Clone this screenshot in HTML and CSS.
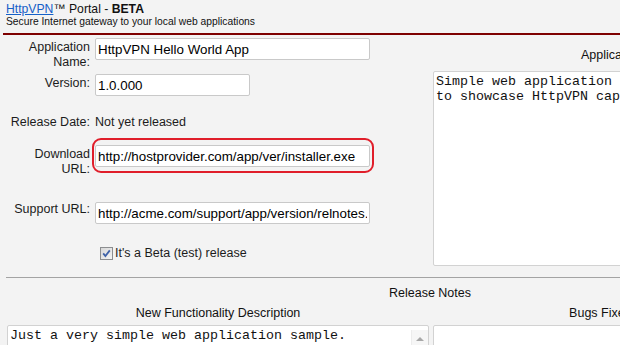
FILE: index.html
```html
<!DOCTYPE html>
<html lang="en">
<head>
    <meta charset="UTF-8">
    <title>HttpVPN Portal - Application</title>
    <link rel="stylesheet" href="styles.css">
</head>
<body>
    <div class="page">
        <!-- header -->
        <div class="masthead">
            <div class="brand"><a href="#">HttpVPN</a>™ Portal - <b>BETA</b></div>
            <div class="tagline">Secure Internet gateway to your local web applications</div>
        </div>
        <div class="rule"></div>

        <!-- application details -->
        <div class="top">
            <div class="app-form">
                <div class="row row-name">
                    <label>Application Name:</label>
                    <input type="text" class="field" value="HttpVPN Hello World App">
                </div>
                <div class="row row-version">
                    <label>Version:</label>
                    <input type="text" class="field field-short" value="1.0.000">
                </div>
                <div class="row row-date">
                    <label>Release Date:</label>
                    <span class="value">Not yet released</span>
                </div>
                <div class="row row-download">
                    <label>Download URL:</label>
                    <div class="highlight">
                        <input type="text" class="field" value="http://hostprovider.com/app/ver/installer.exe">
                    </div>
                </div>
                <div class="row row-support">
                    <label class="label-flush">Support URL:</label>
                    <input type="text" class="field" value="http://acme.com/support/app/version/relnotes.html">
                </div>
                <div class="row row-beta">
                    <span></span>
                    <label class="check">
                        <svg width="13" height="13" viewBox="0 0 13 13">
                            <defs>
                                <linearGradient id="boxFill" x1="0" y1="0" x2="1" y2="1">
                                    <stop offset="0" stop-color="#d6d6d6"/>
                                    <stop offset="1" stop-color="#f6f6f6"/>
                                </linearGradient>
                            </defs>
                            <rect x="0.5" y="0.5" width="12" height="12" fill="url(#boxFill)" stroke="#8c8e90"/>
                            <path d="M3.2 6.4 L5.4 9 L9.8 3.4" fill="none" stroke="#3f62a8" stroke-width="1.8"/>
                        </svg>
                        It's a Beta (test) release
                    </label>
                </div>
            </div>
            <div class="desc-col">
                <div class="col-title">Application Description</div>
                <textarea class="desc-box">Simple web application
to showcase HttpVPN capabilities.</textarea>
            </div>
        </div>

        <div class="divider"></div>

        <!-- release notes -->
        <div class="notes">
            <div class="notes-title">Release Notes</div>
            <div class="notes-grid">
                <div class="notes-col">
                    <div class="col-title">New Functionality Description</div>
                    <div class="scroll-wrap">
                        <textarea class="note-box note-scroll">Just a very simple web application sample.
Shows how a local web application can be
published through the HttpVPN gateway.
It has no other functionality.</textarea>
                        <div class="scroll-bar"><span class="arrow-up"></span></div>
                    </div>
                </div>
                <div class="notes-col">
                    <div class="col-title">Bugs Fixed / Known Issues</div>
                    <textarea class="note-box"></textarea>
                </div>
            </div>
        </div>
    </div>
</body>
</html>
```

FILE: styles.css
```css
/* base */
* {
    box-sizing: border-box;
    margin: 0;
    padding: 0;
}
html, body {
    overflow: hidden;
}
body {
    font-family: "Liberation Sans", Arial, sans-serif;
    font-size: 12.5px;
    line-height: 15px;
    color: #1c1c1c;
    background: #f3f3f3;
}
.page {
    width: 860px;
}

/* header */
.masthead {
    padding: 2px 0 0 6px;
}
.brand {
    font-size: 12.2px;
    line-height: 14px;
    color: #111;
}
.brand a {
    color: #1660c8;
}
.tagline {
    font-size: 10.3px;
    line-height: 12px;
    color: #111;
}
.rule {
    margin: 5px 0 0 3px;
    border-top: 2px solid #7e0000;
}

/* top area */
.top {
    display: grid;
    grid-template-columns: 433px 423px;
}
.app-form {
    padding: 3px 0 0 9px;
}
.row {
    display: grid;
    grid-template-columns: 81px 1fr;
    column-gap: 5px;
    align-items: start;
}
.row label {
    text-align: right;
    padding-top: 2px;
}
.row .label-flush {
    padding-top: 0;
}
.row-version { margin-top: 4px; }
.row-date { margin-top: 19px; }
.row-date label,
.row-date .value { padding-top: 0; }
.row-download { margin-top: 15px; }
.row-support { margin-top: 25px; }
.row-beta { margin-top: 22px; }

.field {
    width: 275px;
    height: 22px;
    padding: 0 2px;
    border: 1px solid #c9c9c9;
    border-radius: 2px;
    background: #fff;
    font-family: "Liberation Sans", Arial, sans-serif;
    font-size: 13.33px;
    color: #000;
    outline: none;
}
.field-short {
    width: 155px;
}
.highlight {
    position: relative;
    width: 275px;
}
.highlight .field {
    display: block;
}
/* red marker drawn around the download url */
.highlight::after {
    content: "";
    position: absolute;
    top: -7px;
    left: -3px;
    right: -4px;
    bottom: -6px;
    border: 2px solid #e01e2a;
    border-radius: 9px;
    pointer-events: none;
}
.check {
    display: flex;
    align-items: center;
    gap: 2px;
    padding-left: 5px;
    padding-top: 0 !important;
    text-align: left !important;
}
.check svg {
    flex: none;
}

.desc-col {
    padding-top: 13px;
}
.col-title {
    text-align: center;
    color: #111;
}
.desc-box {
    display: block;
    width: 423px;
    height: 195px;
    margin-top: 8px;
}
textarea {
    padding: 2px;
    border: 1px solid #d2d2d2;
    border-radius: 2px;
    background: #fff;
    font-family: "Liberation Mono", "Courier New", monospace;
    font-size: 13.33px;
    color: #111;
    resize: none;
    outline: none;
}

/* release notes */
.divider {
    margin: 11px 0 0 6px;
    border-top: 1px solid #a3a3a3;
}
.notes-title {
    text-align: center;
    margin-top: 8px;
    color: #111;
}
.notes-grid {
    display: grid;
    grid-template-columns: 422px 423px;
    column-gap: 4px;
    padding-left: 7px;
    margin-top: 5px;
}
.note-box {
    display: block;
    width: 100%;
    height: 120px;
    margin-top: 4px;
}
.scroll-wrap {
    position: relative;
}
.note-scroll {
    overflow: hidden;
    padding-right: 20px;
}
/* vertical scrollbar of the notes box */
.scroll-bar {
    position: absolute;
    top: 5px;
    right: 1px;
    bottom: 1px;
    width: 17px;
    background: #f6f6f6;
    border-left: 1px solid #ececec;
}
.arrow-up {
    position: absolute;
    top: 7px;
    left: 4px;
    border-left: 4px solid transparent;
    border-right: 4px solid transparent;
    border-bottom: 4px solid #a8a8a8;
}
```
